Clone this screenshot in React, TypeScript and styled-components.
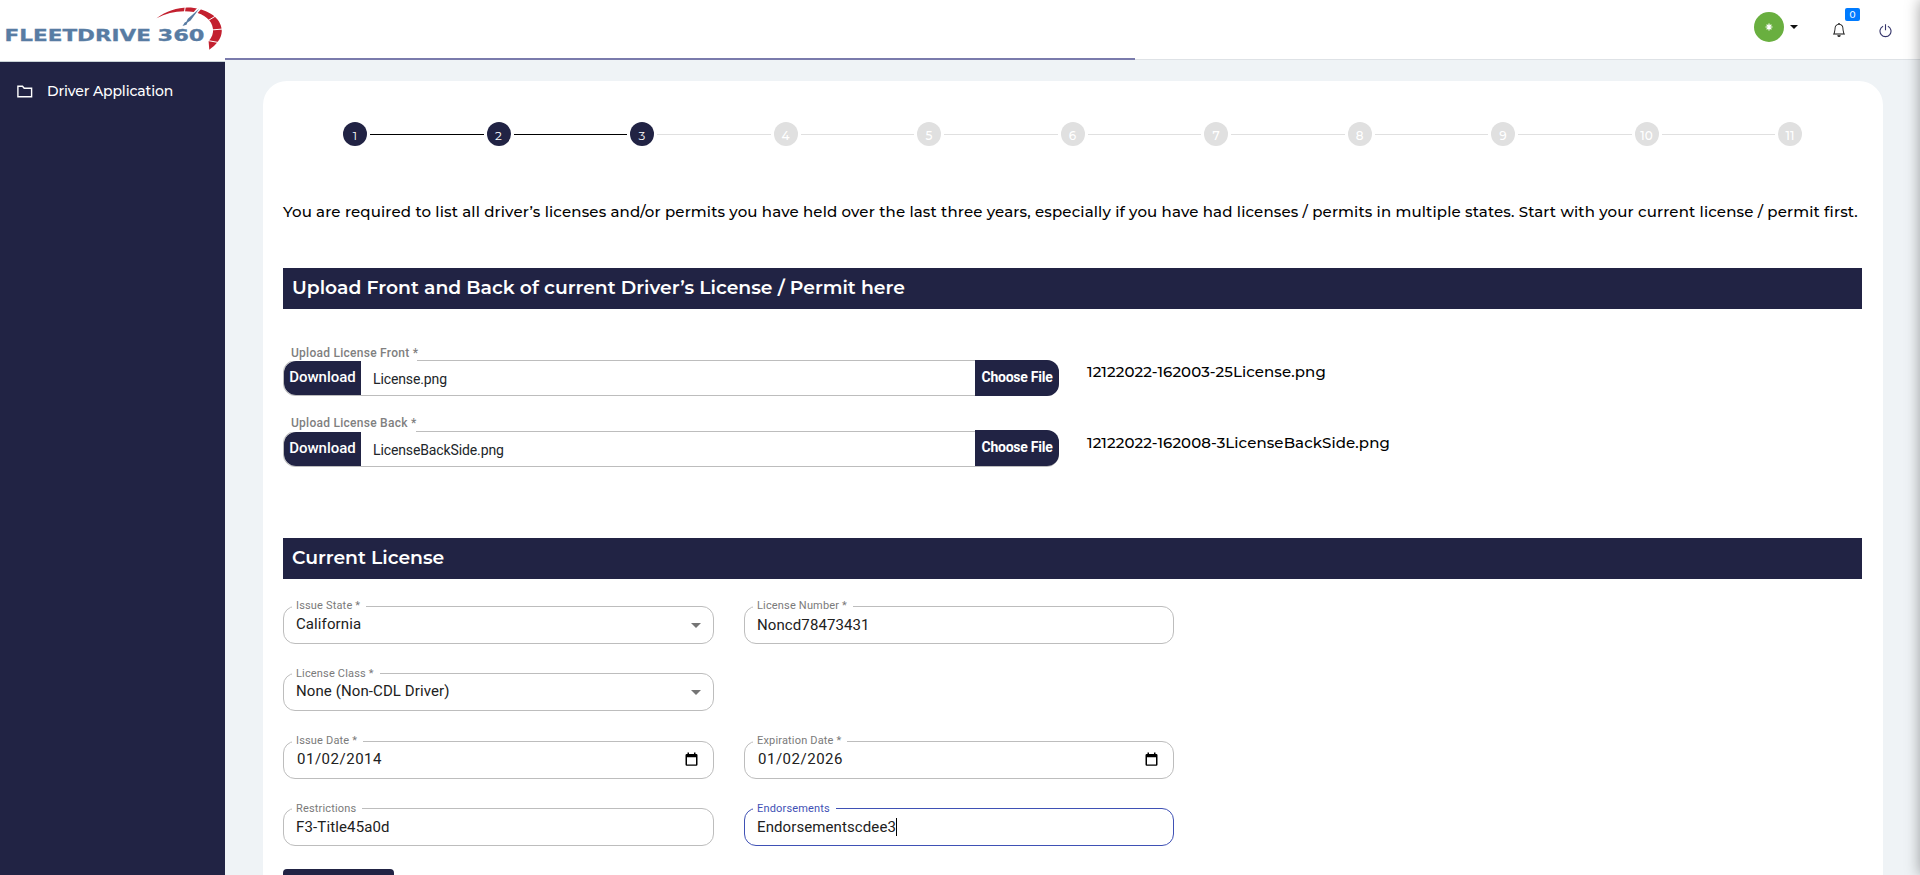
import React from 'react';
import styled, { createGlobalStyle } from 'styled-components';
import { BsBell } from 'react-icons/bs';

const NAVY = '#212344';
const HEADING_FONT = "'Montserrat', 'Inter', sans-serif";
const FORM_FONT = "'Roboto', sans-serif";

const GlobalStyle = createGlobalStyle`
  *, *::before, *::after { box-sizing: border-box; }
  body { margin: 0; background: #eff3f6; font-family: ${HEADING_FONT}; color: #000; overflow: hidden; }
`;

const Page = styled.div`
  position: relative;
  display: flex;
  width: 100%;
  height: 875px;
  overflow: hidden;
`;

const Sidebar = styled.aside`
  display: flex;
  flex-direction: column;
  flex: 0 0 225px;
  background: ${NAVY};
`;

const Brand = styled.div`
  height: 62px;
  background: #fff;
  border-bottom: 1px solid #c9d3d6;
  svg { display: block; }
`;

const NavItem = styled.a`
  display: flex;
  align-items: center;
  gap: 14px;
  height: 58px;
  padding: 0 0 0 17px;
  color: #fff;
  font-size: 14px;
  font-weight: 500;
  letter-spacing: -0.13px;
  white-space: nowrap;
`;

const Main = styled.div`
  display: flex;
  flex-direction: column;
  flex: 1;
  min-width: 0;
`;

const Header = styled.header`
  position: relative;
  display: flex;
  flex: 0 0 60px;
  justify-content: flex-end;
  align-items: flex-start;
  padding-right: 27px;
  background: #fff;
  border-bottom: 1px solid #dee2e6;
`;

const LoadingBar = styled.div`
  position: absolute;
  left: 0;
  bottom: -1px;
  width: 910px;
  height: 2px;
  background: #7a7bac;
`;

const UserMenu = styled.div`
  display: flex;
  align-items: center;
  gap: 6px;
  margin: 12px 34px 0 0;
`;

const Avatar = styled.div`
  display: flex;
  align-items: center;
  justify-content: center;
  width: 30px;
  height: 30px;
  border-radius: 50%;
  background: #69af3f;
`;

const Caret = styled.span<{ $size: number; $color: string }>`
  border-left: ${(p) => p.$size}px solid transparent;
  border-right: ${(p) => p.$size}px solid transparent;
  border-top: ${(p) => p.$size}px solid ${(p) => p.$color};
`;

const Notifications = styled.div`
  position: relative;
  width: 14px;
  height: 14px;
  margin: 23px 33px 0 0;
  color: #111;
  svg { display: block; }
`;

const Badge = styled.span`
  position: absolute;
  left: 13px;
  top: -15px;
  width: 15px;
  height: 13px;
  border-radius: 2px;
  background: #007bff;
  color: #fff;
  font-size: 9px;
  font-weight: 500;
  line-height: 13px;
  text-align: center;
`;

const PowerButton = styled.div`
  margin-top: 24px;
  svg { display: block; }
`;

const Card = styled.main`
  flex: 1;
  margin: 21px 37px 0 38px;
  padding: 41px 21px 0 20px;
  background: #fff;
  border-radius: 24px 24px 0 0;
`;

const Stepper = styled.div`
  display: flex;
  align-items: center;
  padding: 0 60px;
`;

const Step = styled.div<{ $active: boolean }>`
  flex: 0 0 24px;
  height: 24px;
  padding-top: 3px;
  border-radius: 50%;
  background: ${(p) => (p.$active ? NAVY : '#e0e0e0')};
  color: #fff;
  font-size: 12px;
  font-weight: ${(p) => (p.$active ? 400 : 500)};
  line-height: 21px;
  text-align: center;
`;

const Connector = styled.div<{ $active: boolean }>`
  flex: 1;
  height: 1px;
  margin: 1px 3px 0;
  background: ${(p) => (p.$active ? '#000' : '#e0e0e0')};
`;

const Intro = styled.p`
  margin: 54px 0 0;
  font-size: 15px;
  font-weight: 500;
  line-height: 24px;
  letter-spacing: 0.15px;
  white-space: nowrap;
`;

const SectionTitle = styled.h2`
  height: 41px;
  margin: 0;
  padding-left: 9px;
  background: ${NAVY};
  color: #fff;
  font-size: 18.75px;
  font-weight: 600;
  line-height: 40px;
`;

const UploadTitle = styled(SectionTitle)`
  margin-top: 44px;
`;

const Uploads = styled.div`
  display: flex;
  flex-direction: column;
  gap: 35px;
  margin: 51px 0 71px;
`;

const UploadRow = styled.div`
  display: flex;
  height: 36px;
`;

const UploadBox = styled.div`
  position: relative;
  display: flex;
  width: 776px;
  border: 1px solid #bdbdbd;
  border-radius: 12px;
  font-family: ${FORM_FONT};
`;

const UploadLabel = styled.label<{ $raise: number; $width: number }>`
  position: absolute;
  left: 4px;
  top: ${(p) => -16 - p.$raise}px;
  width: ${(p) => p.$width}px;
  height: ${(p) => 16 + p.$raise}px;
  padding-left: 3px;
  background: #fff;
  color: #808080;
  font-size: 12px;
  font-weight: 500;
  line-height: 16px;
  letter-spacing: 0.26px;
  white-space: nowrap;
`;

const DownloadButton = styled.button`
  width: 77px;
  padding: 0 0 3px;
  border: 0;
  border-radius: 12px 0 0 12px;
  background: ${NAVY};
  color: #fff;
  font: 500 15px ${FORM_FONT};
`;

const FileValue = styled.span`
  flex: 1;
  padding-left: 12px;
  color: #212529;
  font-size: 14px;
  line-height: 36px;
  letter-spacing: -0.12px;
`;

const ChooseButton = styled.button<{ $raise: number }>`
  width: 84px;
  height: 36px;
  margin: ${(p) => -1 - p.$raise}px -1px 0 0;
  padding: 0 0 2px;
  border: 0;
  border-radius: 0 12px 12px 0;
  background: ${NAVY};
  color: #fff;
  font: 700 14px ${FORM_FONT};
  letter-spacing: -0.24px;
`;

const UploadedName = styled.span`
  padding-left: 28px;
  font-size: 15px;
  font-weight: 500;
  line-height: 24px;
  letter-spacing: 0.1px;
`;

const FieldGrid = styled.div`
  display: grid;
  grid-template-columns: 431px 430px;
  grid-auto-rows: 38px;
  column-gap: 30px;
  row-gap: 29.4px;
  margin-top: 27px;
`;

const FieldBox = styled.div<{ $focused?: boolean }>`
  position: relative;
  display: flex;
  align-items: center;
  justify-content: space-between;
  padding: 0 12px;
  border: 1px solid ${(p) => (p.$focused ? '#3f51b5' : '#bdbdbd')};
  border-radius: 12px;
  font-family: ${FORM_FONT};
`;

const FieldLabel = styled.label<{ $focused?: boolean }>`
  position: absolute;
  left: 8px;
  top: -7.6px;
  padding: 0 6px 0 4px;
  background: #fff;
  color: ${(p) => (p.$focused ? '#3f51b5' : '#7a7a7a')};
  font-size: 11px;
  line-height: 14px;
  letter-spacing: 0.17px;
  white-space: nowrap;
`;

const FieldValue = styled.span<{ $date: boolean; $lift: number; $spacing: number }>`
  display: flex;
  align-items: center;
  padding: 0 0 ${(p) => p.$lift}px ${(p) => (p.$date ? 1 : 0)}px;
  color: #212121;
  font-size: 15px;
  letter-spacing: ${(p) => p.$spacing}px;
  white-space: nowrap;
`;

const TextCursor = styled.i`
  width: 1px;
  height: 18px;
  background: #000;
`;

const CalendarIcon = styled.svg`
  margin: 0 3px 1px 0;
`;

const EmptyCell = styled.div``;

const PrimaryButton = styled.button`
  display: block;
  width: 111px;
  height: 38px;
  margin-top: 23px;
  border: 0;
  border-radius: 4px;
  background: ${NAVY};
`;

const Drawer = styled.div`
  position: absolute;
  top: 0;
  right: -250px;
  width: 250px;
  height: 875px;
  box-shadow: 0 0 14px rgba(0, 0, 0, 0.36);
`;

function Logo() {
  const wordmark = {
    fontFamily: 'DejaVu Sans',
    fontWeight: 700,
    fontSize: 16.3,
    fill: '#587ca3',
    stroke: '#587ca3',
    strokeWidth: 0.3,
    lengthAdjust: 'spacingAndGlyphs' as const,
  };
  return (
    <svg width="225" height="61" viewBox="0 0 225 61">
      <text x="4.500" y="41" textLength="146.500" {...wordmark}>FLEETDRIVE</text>
      <text x="157.500" y="41" textLength="47" {...wordmark}>360</text>
      <path
        d="M156.500 18.200C168 9.500 182 6.200 194 7.900C212 10.500 222 20.500 221.800 31C221.500 39 216 45 209.300 49.700L208.600 41.200C212 37.500 213.500 33 213 29C212 20 204 14.300 194 12C181 9.800 168 12 156.500 18.200Z"
        fill="#c3202f"
      />
      <g stroke="#fff" strokeWidth="1">
        <path d="M185.300 6.500L184.300 13M216.500 15.500L206.500 21.500M223 29L211 30M218.500 42.500L206.500 40.300" />
        <path d="M200.500 7L193 15.500" strokeWidth="3.500" />
      </g>
      <path d="M199.200 8.800L190.600 20.600L187.500 22.600L186.500 24.800L182.500 25.900L184.700 22.600L186.300 21.800L187.800 18.800Z" fill="#587ca3" />
    </svg>
  );
}

function Calendar() {
  return (
    <CalendarIcon width="13" height="15" viewBox="0 0 13 15">
      <path d="M2.500 0.500h1.500v1.500h5v-1.500h1.500v1.500h0.800q1.200 0 1.200 1.200v9.300q0 1.200-1.200 1.200h-9.600q-1.200 0-1.200-1.200v-9.300q0-1.200 1.200-1.200h0.800zM2 5.200v7.200h9v-7.200z" fill="#000" fillRule="evenodd" />
    </CalendarIcon>
  );
}

type FieldProps = {
  label: string;
  value: string;
  kind?: 'text' | 'select' | 'date';
  focused?: boolean;
  spacing?: number;
};

function Field({ label, value, kind = 'text', focused, spacing = 0.1 }: FieldProps) {
  return (
    <FieldBox $focused={focused}>
      <FieldLabel $focused={focused}>{label}</FieldLabel>
      <FieldValue $date={kind === 'date'} $lift={kind === 'text' ? 0 : 2} $spacing={spacing}>
        {value}
        {focused && <TextCursor />}
      </FieldValue>
      {kind === 'select' && <Caret $size={5} $color="#757575" />}
      {kind === 'date' && <Calendar />}
    </FieldBox>
  );
}

type UploadProps = {
  label: string;
  labelWidth: number;
  file: string;
  storedAs: string;
  raise: number;
};

function Upload({ label, labelWidth, file, storedAs, raise }: UploadProps) {
  return (
    <UploadRow>
      <UploadBox>
        <UploadLabel $raise={raise} $width={labelWidth}>{label}</UploadLabel>
        <DownloadButton>Download</DownloadButton>
        <FileValue>{file}</FileValue>
        <ChooseButton $raise={raise}>Choose File</ChooseButton>
      </UploadBox>
      <UploadedName>{storedAs}</UploadedName>
    </UploadRow>
  );
}

const STEPS = Array.from({ length: 11 }, (_, i) => i + 1);
const CURRENT_STEP = 3;

export default function App() {
  return (
    <Page>
      <GlobalStyle />
      <Sidebar>
        <Brand><Logo /></Brand>
        <NavItem>
          <svg width="16" height="13" viewBox="0 0 16 13" fill="none" stroke="#fff" strokeWidth="1.400">
            <path d="M0.900 11.800V1.200h4.600l1.700 2h7.400v8.600z" />
          </svg>
          Driver Application
        </NavItem>
      </Sidebar>
      <Main>
        <Header>
          <LoadingBar />
          <UserMenu>
            <Avatar>
              <svg width="8" height="8" viewBox="0 0 8 8" stroke="#fff" strokeWidth="1.200">
                <path d="M4 0.500v7M0.500 4h7M1.600 1.600l4.800 4.800M6.400 1.600l-4.800 4.800" />
              </svg>
            </Avatar>
            <Caret $size={4} $color="#111" />
          </UserMenu>
          <Notifications>
            <BsBell size={14} />
            <Badge>0</Badge>
          </Notifications>
          <PowerButton>
            <svg width="14" height="14" viewBox="0 0 14 14" fill="none" stroke="#34346a" strokeWidth="1.100">
              <path d="M4.100 2.200a5.500 5.500 0 1 0 4.800 0M6.500 0.300v6" />
            </svg>
          </PowerButton>
        </Header>
        <Card>
          <Stepper>
            {STEPS.map((n) => (
              <React.Fragment key={n}>
                {n > 1 && <Connector $active={n <= CURRENT_STEP} />}
                <Step $active={n <= CURRENT_STEP}>{n}</Step>
              </React.Fragment>
            ))}
          </Stepper>
          <Intro>
            You are required to list all driver’s licenses and/or permits you have held over the last three years, especially if you have had licenses / permits in multiple states. Start with your current license / permit first.
          </Intro>
          <UploadTitle>Upload Front and Back of current Driver’s License / Permit here</UploadTitle>
          <Uploads>
            <Upload
              label="Upload License Front *"
              labelWidth={129}
              file="License.png"
              storedAs="12122022-162003-25License.png"
              raise={0}
            />
            <Upload
              label="Upload License Back *"
              labelWidth={128}
              file="LicenseBackSide.png"
              storedAs="12122022-162008-3LicenseBackSide.png"
              raise={1}
            />
          </Uploads>
          <SectionTitle>Current License</SectionTitle>
          <FieldGrid>
            <Field label="Issue State *" value="California" kind="select" />
            <Field label="License Number *" value="Noncd78473431" />
            <Field label="License Class *" value="None (Non-CDL Driver)" kind="select" />
            <EmptyCell />
            <Field label="Issue Date *" value="01/02/2014" kind="date" spacing={0.52} />
            <Field label="Expiration Date *" value="01/02/2026" kind="date" spacing={0.52} />
            <Field label="Restrictions" value="F3-Title45a0d" spacing={0.14} />
            <Field label="Endorsements" value="Endorsementscdee3" focused />
          </FieldGrid>
          <PrimaryButton />
        </Card>
      </Main>
      <Drawer />
    </Page>
  );
}
